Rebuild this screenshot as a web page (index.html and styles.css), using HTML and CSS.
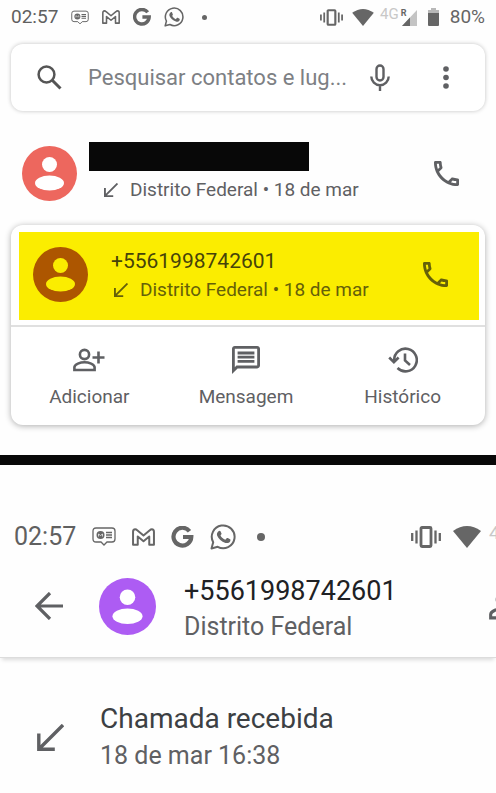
FILE: index.html
```html
<!DOCTYPE html>
<html lang="pt-BR">
<head>
<meta charset="utf-8">
<meta name="viewport" content="width=device-width, initial-scale=1">
<title>Telefone</title>
<link rel="stylesheet" href="styles.css">
</head>
<body>
<svg class="sprite" aria-hidden="true">
  <symbol id="i-card" viewBox="0 0 24 19">
    <path d="M4 1h16q3 0 3 3v8q0 3-3 3h-5l-3 3-3-3H4q-3 0-3-3V4q0-3 3-3z" fill="none" stroke="currentColor" stroke-width="1.300"/>
    <circle cx="8.500" cy="8" r="4" fill="currentColor"/><path d="M6.500 9.500V7l2 1.500 2-1.500v2.500" fill="none" stroke="#fff" stroke-width=".7"/>
    <path d="M14 5.500h6M14 8h6M14 10.500h6" stroke="currentColor" stroke-width="1.400"/>
  </symbol>
  <symbol id="i-mail" viewBox="0 0 22 17">
    <path d="M1 3.500Q1 1 3 1q1 0 2 1l6 5 6-5q1-1 2-1 2 0 2 2.500V16h-4.500V8L11 12.500 5.500 8v8H1z" fill="none" stroke="currentColor" stroke-width="1.900" stroke-linejoin="round"/>
  </symbol>
  <symbol id="i-g" viewBox="0 0 22 22">
    <path d="M18 5.300A8.900 8.900 0 1 0 19.800 11H11.500" fill="none" stroke="currentColor" stroke-width="4.200"/>
  </symbol>
  <symbol id="i-chat" viewBox="0 0 26 26">
    <path d="M1.500 24.500l1.700-6.200A11.400 11.400 0 1 1 7.700 22.800z" fill="none" stroke="currentColor" stroke-width="2" stroke-linejoin="round"/>
    <path d="M8.500 7.200c.6-.7 1.600-.8 2 0l1 2.400c.2.600-.2 1-1 1.900 1.100 2.100 2.700 3.400 4.800 4.300l1.400-1.600c.4-.4.700-.3 1.100-.1l2.300 1.200c.6.300.4 1.400 0 2.100-.8 1.400-2.700 2.100-4.600 1.500-4.200-1.300-6.800-3.700-8.300-7.100-.6-1.700-.1-3.500 1.300-4.600z" fill="currentColor"/>
  </symbol>
  <symbol id="i-vibrate" viewBox="0 0 30 22">
    <rect x="10" y="1.500" width="10" height="19" rx="1" fill="none" stroke="currentColor" stroke-width="2.800"/>
    <path d="M1.200 7v8M5.500 4.500v13M24.500 4.500v13M28.800 7v8" stroke="currentColor" stroke-width="2.300"/>
  </symbol>
  <symbol id="i-wifi" viewBox="0 0 28 22"><path d="M0 5Q14-5 28 5L14 22z" fill="currentColor"/></symbol>
  <symbol id="i-signal" viewBox="0 0 16 17"><path d="M16 1v16H1z" fill="#c4c4c4"/><path d="M9 8.500V17H1z" fill="currentColor"/></symbol>
  <symbol id="i-battery" viewBox="0 0 11 18"><path d="M3 0h5v2h3v4H0V2h3z" fill="#b8b8b8"/><path d="M0 5h11v12q0 1-1 1H1q-1 0-1-1z" fill="currentColor"/></symbol>
  <symbol id="i-search" viewBox="0 0 25 25"><circle cx="9.500" cy="9.500" r="7.900" fill="none" stroke="currentColor" stroke-width="2.500"/><path d="M15 15l8.500 8.500" stroke="currentColor" stroke-width="3"/></symbol>
  <symbol id="i-mic" viewBox="0 0 20 27"><rect x="6.500" y="1.500" width="7" height="15" rx="3.500" fill="none" stroke="currentColor" stroke-width="2.400"/><path d="M1.300 12.500a8.700 8.700 0 0 0 17.400 0M10 21v6" fill="none" stroke="currentColor" stroke-width="2.400"/></symbol>
  <symbol id="i-more" viewBox="0 0 6 23"><g fill="currentColor"><circle cx="3" cy="3" r="2.800"/><circle cx="3" cy="11.500" r="2.800"/><circle cx="3" cy="20" r="2.800"/></g></symbol>
  <symbol id="i-person" viewBox="0 0 55 55"><circle cx="27.500" cy="27.500" r="27.500" fill="currentColor"/><g class="figure"><circle cx="27.500" cy="18.500" r="7.500"/><ellipse cx="27.500" cy="37" rx="14.500" ry="7.500"/></g></symbol>
  <symbol id="i-incoming" viewBox="0 0 27 27"><path d="M26 1L2.500 24.500M1.800 9.500v15.700h16" fill="none" stroke="currentColor"/></symbol>
  <symbol id="i-phone" viewBox="3 3 18 18"><path fill="currentColor" d="M6.540 5c.06.89.21 1.760.45 2.590l-1.200 1.200c-.41-1.200-.67-2.470-.76-3.790h1.510m9.860 12.020c.85.24 1.720.39 2.600.45v1.490c-1.320-.09-2.590-.35-3.800-.75l1.200-1.190M7.500 3H4c-.55 0-1 .45-1 1 0 9.390 7.610 17 17 17 .55 0 1-.45 1-1v-3.490c0-.55-.45-1-1-1-1.240 0-2.450-.2-3.570-.57-.1-.04-.21-.05-.31-.05-.26 0-.51.1-.71.29l-2.200 2.200c-2.830-1.450-5.150-3.760-6.590-6.590l2.200-2.200c.28-.28.36-.67.25-1.020C8.700 6.450 8.500 5.250 8.500 4c0-.55-.45-1-1-1z"/></symbol>
  <symbol id="i-add" viewBox="0 0 32 23"><circle cx="11.500" cy="6" r="4.600" fill="none" stroke="currentColor" stroke-width="2.600"/><path d="M1.400 21.500v-2.800c0-3 6-5 10.100-5s10.100 2 10.100 5v2.800zM25.500 3v12M19.500 9h12" fill="none" stroke="currentColor" stroke-width="2.600"/></symbol>
  <symbol id="i-message" viewBox="2 2 20 20"><path fill="currentColor" d="M4 4h16v12H5.170L4 17.170V4m0-2c-1.100 0-1.990.9-1.990 2L2 22l4-4h14c1.100 0 2-.9 2-2V4c0-1.100-.9-2-2-2H4zm2 10h12v2H6v-2zm0-3h12v2H6V9zm0-3h12v2H6V6z"/></symbol>
  <symbol id="i-history" viewBox="0 0 30 26"><path d="M6.200 13.500a11.300 11.300 0 1 1 3.300 7.500M1.200 10.500l4.700 4.700 4.700-4.700M17 6.500v7l5 4.500" fill="none" stroke="currentColor" stroke-width="2.600"/></symbol>
  <symbol id="i-back" viewBox="0 0 28 28"><path d="M28 14H2.500M15 1L2 14l13 13" fill="none" stroke="currentColor" stroke-width="3.200"/></symbol>
</svg>

<main>
  <section class="screen recents">
    <header class="status">
      <div class="status-left">
        <span class="clock">02:57</span>
        <svg class="s-card"><use href="#i-card"/></svg>
        <svg class="s-mail"><use href="#i-mail"/></svg>
        <svg class="s-g"><use href="#i-g"/></svg>
        <svg class="s-chat"><use href="#i-chat"/></svg>
        <i class="dot"></i>
      </div>
      <div class="status-right">
        <svg class="s-vibrate"><use href="#i-vibrate"/></svg>
        <svg class="s-wifi"><use href="#i-wifi"/></svg>
        <span class="network">4G</span>
        <span class="signal"><svg><use href="#i-signal"/></svg><b>R</b></span>
        <svg class="s-battery"><use href="#i-battery"/></svg>
        <span>80%</span>
      </div>
    </header>

    <form class="search">
      <svg class="search-icon"><use href="#i-search"/></svg>
      <input type="text" aria-label="Pesquisar" placeholder="Pesquisar contatos e lug...">
      <button type="button" class="mic" aria-label="Voz"><svg><use href="#i-mic"/></svg></button>
      <button type="button" class="more" aria-label="Mais"><svg><use href="#i-more"/></svg></button>
    </form>

    <article class="call first">
      <svg class="avatar red"><use href="#i-person"/></svg>
      <div class="info">
        <div class="redacted"></div>
        <p class="detail"><svg><use href="#i-incoming"/></svg>Distrito Federal • 18 de mar</p>
      </div>
      <button type="button" class="dial" aria-label="Ligar"><svg><use href="#i-phone"/></svg></button>
    </article>

    <div class="card">
      <article class="call highlight">
        <svg class="avatar brown"><use href="#i-person"/></svg>
        <div class="info">
          <h2>+5561998742601</h2>
          <p class="detail"><svg><use href="#i-incoming"/></svg>Distrito Federal • 18 de mar</p>
        </div>
        <button type="button" class="dial" aria-label="Ligar"><svg><use href="#i-phone"/></svg></button>
      </article>
      <div class="actions">
        <button type="button"><svg class="a-add"><use href="#i-add"/></svg>Adicionar</button>
        <button type="button"><svg class="a-message"><use href="#i-message"/></svg>Mensagem</button>
        <button type="button"><svg class="a-history"><use href="#i-history"/></svg>Histórico</button>
      </div>
    </div>
  </section>

  <section class="screen details">
    <header class="status large">
      <div class="status-left">
        <span class="clock">02:57</span>
        <svg class="s-card"><use href="#i-card"/></svg>
        <svg class="s-mail"><use href="#i-mail"/></svg>
        <svg class="s-g"><use href="#i-g"/></svg>
        <svg class="s-chat"><use href="#i-chat"/></svg>
        <i class="dot"></i>
      </div>
      <div class="status-right">
        <svg class="s-vibrate"><use href="#i-vibrate"/></svg>
        <svg class="s-wifi"><use href="#i-wifi"/></svg>
        <span class="network">4</span>
      </div>
    </header>
    <div class="contact">
      <button type="button" class="back" aria-label="Voltar"><svg><use href="#i-back"/></svg></button>
      <svg class="avatar purple"><use href="#i-person"/></svg>
      <div class="info">
        <h1>+5561998742601</h1>
        <p>Distrito Federal</p>
      </div>
      <button type="button" class="add" aria-label="Adicionar contato"><svg><use href="#i-add"/></svg></button>
    </div>
    <div class="entry">
      <svg><use href="#i-incoming"/></svg>
      <div>
        <h2>Chamada recebida</h2>
        <p>18 de mar 16:38</p>
      </div>
    </div>
  </section>
</main>
</body>
</html>
```
FILE: styles.css
```css
* { box-sizing: border-box; }
body {
  margin: 0;
  background: #fefefe;
  color: #5f6063;
  font-family: Roboto, "Liberation Sans", sans-serif;
  overflow-x: hidden;
}
h1, h2, p { margin: 0; font-weight: 400; }
svg { display: block; flex: none; }
button {
  display: block;
  flex: none;
  padding: 0;
  border: 0;
  background: none;
  color: inherit;
  font: inherit;
}
button svg { width: 100%; height: 100%; }
.sprite { position: absolute; width: 0; height: 0; }
.screen { overflow: hidden; }

/* Status bar */
.status {
  display: flex;
  justify-content: space-between;
  height: 34px;
  padding: 0 11px;
  font-size: 19px;
  line-height: 34px;
  color: #666;
}
.status-left, .status-right { display: flex; align-items: center; }
.status-left { gap: 13px; }
.status .s-card { width: 18px; height: 15px; }
.status .s-mail { width: 18px; height: 14px; }
.status .s-g { width: 18px; height: 18px; }
.status .s-chat { width: 20px; height: 20px; }
.dot { width: 5px; height: 5px; margin-left: 5px; border-radius: 50%; background: currentColor; }
.clock { color: #606060; }
.s-vibrate { width: 23px; height: 17px; margin-right: 9px; }
.s-wifi { width: 22px; height: 17px; margin-right: 6px; }
.network { align-self: flex-start; font-size: 15px; line-height: 29px; color: #c8c8c8; }
.signal { position: relative; width: 16px; height: 17px; margin: 0 11px 0 2px; }
.signal svg { width: 16px; height: 17px; }
.signal b { position: absolute; left: 0; top: 0; font-size: 9px; line-height: 8px; }
.s-battery { width: 11px; height: 18px; margin-right: 11px; }

/* Search */
.search {
  display: flex;
  align-items: center;
  height: 67px;
  margin: 10px 11px 0;
  padding: 0 36px 0 26px;
  border-radius: 12px;
  background: #fff;
  box-shadow: 0 0 4px rgba(0, 0, 0, .24);
}
.search-icon { width: 25px; height: 25px; color: #555; }
.search input {
  flex: 1;
  min-width: 0;
  padding: 0;
  margin: 0 16px 0 26px;
  border: 0;
  outline: 0;
  background: none;
  font: 22px/32px Roboto, "Liberation Sans", sans-serif;
}
.search input::placeholder { color: #7d8084; opacity: 1; }
.mic { width: 20px; height: 27px; margin-right: 53px; }
.more { width: 6px; height: 23px; }

/* Call rows */
.call { display: flex; align-items: center; }
.call .avatar { width: 55px; height: 55px; }
.figure { fill: var(--figure, #fff); }
.red { color: #ed675e; }
.brown { color: #ad5600; --figure: #fbed00; }
.purple { color: #ad5cf3; }
.info { flex: 1; min-width: 0; white-space: nowrap; }
.detail { display: flex; align-items: center; gap: 12px; font-size: 19px; line-height: 28px; }
.detail svg { width: 14px; height: 14px; stroke-width: 3.6; }
.dial { width: 25px; height: 25px; }
.first { margin: 31px 37px 0 22px; }
.first .info { margin-left: 12px; }
.redacted { width: 220px; height: 29px; margin-bottom: 5px; background: #080808; }
.first .detail { padding-left: 15px; }

.card {
  margin: 21px 11px 30px;
  padding-top: 7px;
  border-radius: 12px;
  background: #fff;
  box-shadow: 0 1px 6px rgba(0, 0, 0, .32);
}
.highlight {
  height: 88px;
  margin: 0 6px 5px 8px;
  padding: 0 31px 3px 14px;
  background: #fbed00;
  color: #656009;
}
.highlight .info { margin-left: 23px; }
.highlight h2 { font-size: 21px; line-height: 30px; color: #46430a; }
.highlight .detail { padding-left: 3px; }
.actions {
  display: grid;
  grid-template-columns: repeat(3, 1fr);
  height: 100px;
  padding-right: 4px;
  border-top: 2px solid #e0e0e0;
}
.actions button {
  display: flex;
  flex-direction: column;
  align-items: center;
  padding-top: 19px;
  font-size: 19px;
  line-height: 30px;
}
.actions svg { width: 30px; height: 28px; margin-bottom: 8px; }
.actions .a-add { width: 32px; }

/* Call details */
.details { border-top: 10px solid #080808; }
.large {
  height: 96px;
  padding: 47px 0 0 14px;
  font-size: 25px;
  line-height: 49px;
}
.large .status-left { gap: 16px; }
.large .s-card { width: 24px; height: 19px; }
.large .s-mail { width: 23px; height: 18px; }
.large .s-g { width: 23px; height: 22px; }
.large .s-chat { width: 26px; height: 26px; }
.large .dot { width: 8px; height: 8px; }
.large .status-right { width: 85px; overflow: hidden; }
.large .s-vibrate { width: 30px; height: 22px; margin-right: 12px; }
.large .s-wifi { width: 28px; height: 22px; margin-right: 8px; }
.large .network { font-size: 19px; line-height: 42px; }
.contact {
  display: flex;
  align-items: center;
  height: 97px;
  padding: 0 0 6px 35px;
  border-bottom: 1px solid #dcdcdc;
  box-shadow: 0 4px 4px -2px rgba(0, 0, 0, .14);
}
.back { width: 28px; height: 28px; margin-right: 36px; }
.contact .avatar { width: 57px; height: 57px; margin-right: 28px; }
.contact .info { padding-top: 5px; }
.contact h1 { font-size: 27px; line-height: 36px; color: #202124; }
.contact p { font-size: 25px; line-height: 36px; }
.contact .add { width: 7px; height: 28px; overflow: hidden; }
.contact .add svg { width: 38px; }
.entry { display: flex; align-items: center; gap: 36px; padding: 42px 37px 20px; }
.entry svg { width: 27px; height: 27px; stroke-width: 3.4; }
.entry h2 { font-size: 28px; line-height: 38px; color: #3c4043; }
.entry p { font-size: 25px; line-height: 36px; }
```
